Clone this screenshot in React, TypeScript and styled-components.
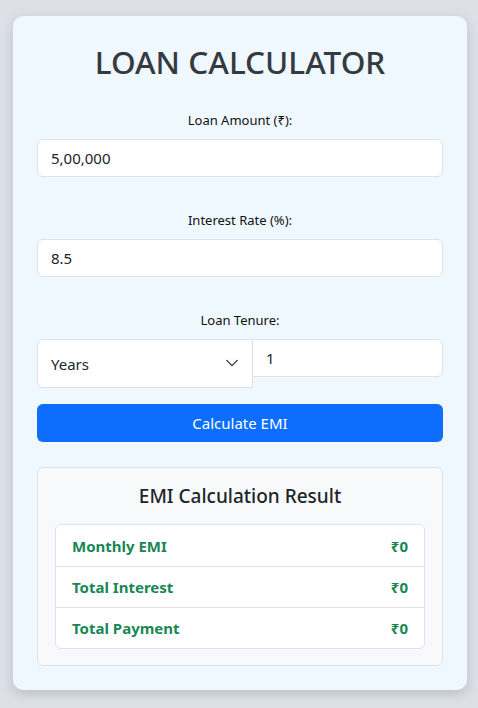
import styled, { createGlobalStyle } from "styled-components";

const GlobalStyle = createGlobalStyle`
  * {
    box-sizing: border-box;
  }
  body {
    margin: 0;
    background: #dde1e7;
    font-family: "Noto Sans", "Open Sans", sans-serif;
    color: #212529;
  }
`;

const results = [
  { label: "Monthly EMI", value: "₹0" },
  { label: "Total Interest", value: "₹0" },
  { label: "Total Payment", value: "₹0" },
];

const App = () => {
  return (
    <>
      <GlobalStyle />
      <Page>
        <Card>
          <Title>LOAN CALCULATOR</Title>

          <Field>
            <Label>Loan Amount (₹):</Label>
            <Input defaultValue="5,00,000" />
          </Field>

          <Field>
            <Label>Interest Rate (%):</Label>
            <Input defaultValue="8.5" />
          </Field>

          <Field $last>
            <Label>Loan Tenure:</Label>
            <TenureGroup>
              <SelectWrap>
                <Select defaultValue="years">
                  <option value="years">Years</option>
                  <option value="months">Months</option>
                </Select>
                <Chevron viewBox="0 0 16 16" fill="none">
                  <path
                    d="M2 5l6 6 6-6"
                    stroke="#343a40"
                    strokeWidth="1.6"
                    strokeLinecap="round"
                    strokeLinejoin="round"
                  />
                </Chevron>
              </SelectWrap>
              <TenureInput defaultValue="1" />
            </TenureGroup>
          </Field>

          <Button>Calculate EMI</Button>

          <ResultBox>
            <ResultTitle>EMI Calculation Result</ResultTitle>
            <List>
              {results.map((r) => (
                <Row key={r.label}>
                  <span>{r.label}</span>
                  <span>{r.value}</span>
                </Row>
              ))}
            </List>
          </ResultBox>
        </Card>
      </Page>
    </>
  );
};

export default App;

const Page = styled.div`
  min-height: 708px;
  padding: 16px 11px 18px 13px;
`;

const Card = styled.div`
  width: 454px;
  background: #f0f8ff;
  border-radius: 10px;
  padding: 24px;
  box-shadow: 0 4px 12px rgba(0, 0, 0, 0.15);
`;

const Title = styled.h1`
  margin: 0 0 27px;
  text-align: center;
  font-size: 31.5px;
  font-weight: 500;
  line-height: 43px;
  color: #343a40;
`;

const Field = styled.div<{ $last?: boolean }>`
  display: flex;
  flex-direction: column;
  margin-bottom: ${(p) => (p.$last ? "16px" : "33px")};
`;

const Label = styled.label`
  text-align: center;
  font-size: 13px;
  line-height: 21px;
  margin-bottom: 8px;
  color: #111;
`;

const Input = styled.input`
  width: 100%;
  height: 38px;
  padding: 6px 13px;
  font-family: inherit;
  font-size: 15px;
  color: #212529;
  background: #fff;
  border: 1px solid #dee2e6;
  border-radius: 6px;
  outline: none;
`;

const TenureGroup = styled.div`
  display: flex;
  align-items: flex-start;
`;

const SelectWrap = styled.div`
  position: relative;
  width: 216px;
  flex-shrink: 0;
`;

const Select = styled.select`
  width: 100%;
  height: 49px;
  padding: 6px 36px 6px 13px;
  font-family: inherit;
  font-size: 15px;
  color: #212529;
  background: #fff;
  border: 1px solid #dee2e6;
  border-radius: 6px 0 0 6px;
  border-bottom-right-radius: 0;
  appearance: none;
  outline: none;
`;

const Chevron = styled.svg`
  position: absolute;
  right: 14px;
  top: 17px;
  width: 14px;
  height: 14px;
  pointer-events: none;
`;

const TenureInput = styled(Input)`
  flex: 1;
  margin-left: -1px;
  border-radius: 0 6px 6px 0;
`;

const Button = styled.button`
  width: 100%;
  height: 38px;
  border: none;
  border-radius: 6px;
  background: #0d6efd;
  color: #fff;
  font-family: inherit;
  font-size: 15px;
  cursor: pointer;
  margin-bottom: 25px;
`;

const ResultBox = styled.div`
  background: #f8f9fa;
  border: 1px solid #dee2e6;
  border-radius: 6px;
  padding: 16px 17px 16px;
`;

const ResultTitle = styled.h5`
  margin: 0 0 16px;
  text-align: center;
  font-size: 19px;
  font-weight: 500;
  line-height: 24px;
  color: #212529;
`;

const List = styled.div`
  background: #fff;
  border: 1px solid #dee2e6;
  border-radius: 6px;
  overflow: hidden;
`;

const Row = styled.div`
  display: flex;
  justify-content: space-between;
  align-items: center;
  height: 41px;
  padding: 0 16px;
  font-size: 15px;
  font-weight: 700;
  color: #198754;
  & + & {
    border-top: 1px solid #dee2e6;
  }
`;
